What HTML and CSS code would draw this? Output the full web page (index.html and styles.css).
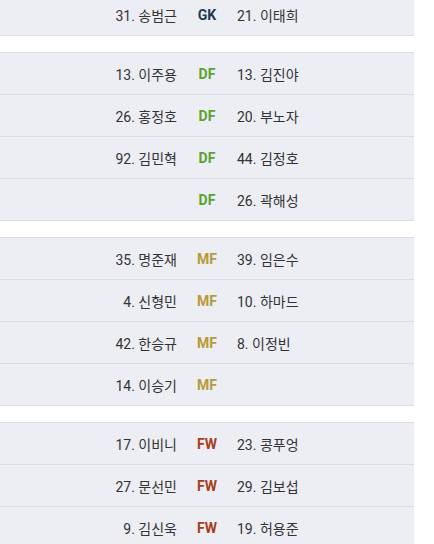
FILE: index.html
```html
<!DOCTYPE html>
<html lang="ko">
<head>
<meta charset="utf-8">
<link rel="stylesheet" href="styles.css">
</head>
<body>
<div class="lineup">
  <div class="group">
    <div class="row"><span class="home">31. 송범근</span><span class="pos gk">GK</span><span class="away">21. 이태희</span></div>
  </div>
  <div class="group">
    <div class="row"><span class="home">13. 이주용</span><span class="pos df">DF</span><span class="away">13. 김진야</span></div>
    <div class="row"><span class="home">26. 홍정호</span><span class="pos df">DF</span><span class="away">20. 부노자</span></div>
    <div class="row"><span class="home">92. 김민혁</span><span class="pos df">DF</span><span class="away">44. 김정호</span></div>
    <div class="row"><span class="home"></span><span class="pos df">DF</span><span class="away">26. 곽해성</span></div>
  </div>
  <div class="group">
    <div class="row"><span class="home">35. 명준재</span><span class="pos mf">MF</span><span class="away">39. 임은수</span></div>
    <div class="row"><span class="home">4. 신형민</span><span class="pos mf">MF</span><span class="away">10. 하마드</span></div>
    <div class="row"><span class="home">42. 한승규</span><span class="pos mf">MF</span><span class="away">8. 이정빈</span></div>
    <div class="row"><span class="home">14. 이승기</span><span class="pos mf">MF</span><span class="away"></span></div>
  </div>
  <div class="group">
    <div class="row"><span class="home">17. 이비니</span><span class="pos fw">FW</span><span class="away">23. 콩푸엉</span></div>
    <div class="row"><span class="home">27. 문선민</span><span class="pos fw">FW</span><span class="away">29. 김보섭</span></div>
    <div class="row"><span class="home">9. 김신욱</span><span class="pos fw">FW</span><span class="away">19. 허용준</span></div>
  </div>
</div>
</body>
</html>
```

FILE: styles.css
```css
html, body {
  margin: 0;
  padding: 0;
  background: #ffffff;
}
body {
  font-family: Roboto, "Noto Sans CJK KR", sans-serif;
  font-size: 14px;
  color: #333333;
}
.lineup {
  width: 414px;
  margin-top: -7px;
}
.group {
  background: #eceef3;
  border-top: 1px solid #dcdee3;
  margin-bottom: 16px;
}
.row {
  display: grid;
  grid-template-columns: 1fr 60px 1fr;
  align-items: center;
  height: 41px;
  border-bottom: 1px solid #dcdee3;
}
.home {
  text-align: right;
}
.away {
  text-align: left;
}
.pos {
  text-align: center;
  font-weight: 700;
}
.gk { color: #1f3a4f; }
.df { color: #5ca22e; }
.mf { color: #b49b38; }
.fw { color: #a3411c; }
```
